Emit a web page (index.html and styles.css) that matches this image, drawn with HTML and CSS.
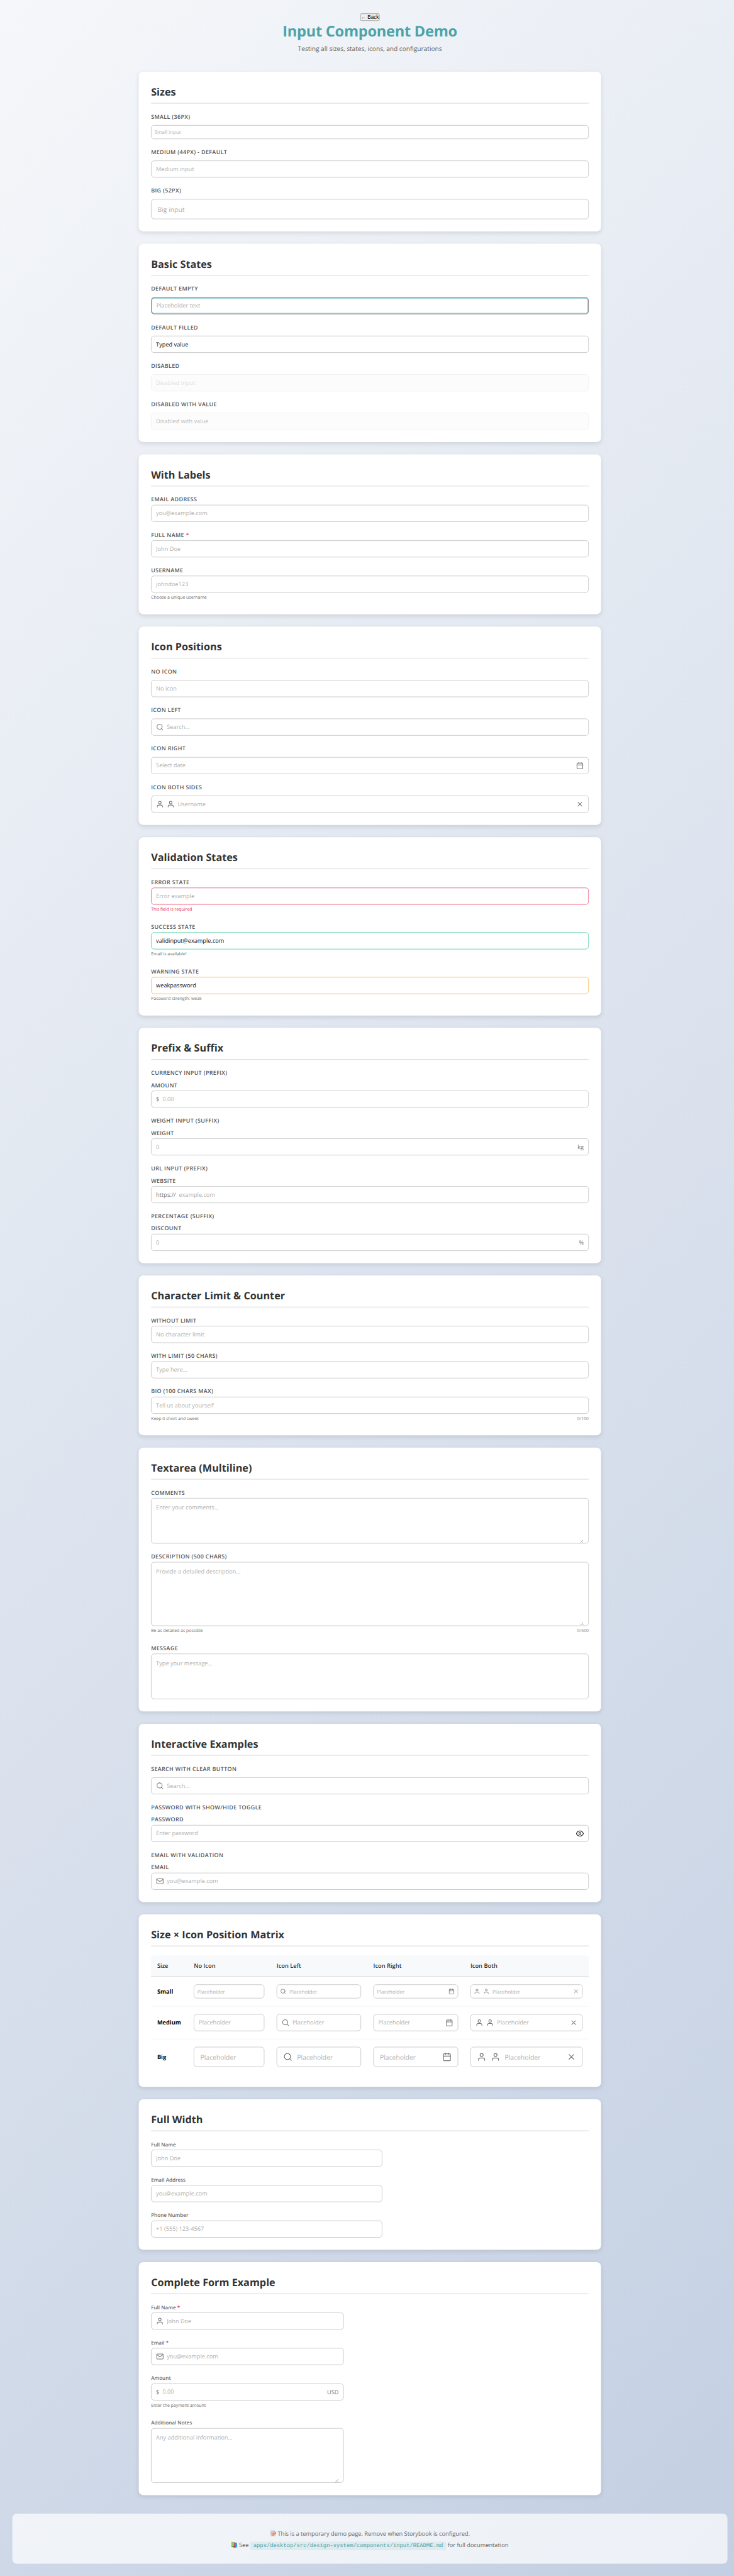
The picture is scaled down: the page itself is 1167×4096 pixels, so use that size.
FILE: index.html
```html
<!DOCTYPE html>
<html lang="en">
<head>
<meta charset="utf-8">
<title>Input Component Demo</title>
<link rel="stylesheet" href="styles.css">
</head>
<body>
<svg class="sprite" aria-hidden="true">
  <symbol id="search" viewBox="0 0 24 24"><circle cx="11" cy="11" r="8"/><path d="M21 21l-4.35-4.35"/></symbol>
  <symbol id="calendar" viewBox="0 0 24 24"><rect x="3" y="4" width="18" height="18" rx="2"/><path d="M16 2v4M8 2v4M3 10h18"/></symbol>
  <symbol id="user" viewBox="0 0 24 24"><path d="M20 21v-2a4 4 0 0 0-4-4H8a4 4 0 0 0-4 4v2"/><circle cx="12" cy="7" r="4"/></symbol>
  <symbol id="close" viewBox="0 0 24 24"><path d="M18 6L6 18M6 6l12 12"/></symbol>
  <symbol id="eye" viewBox="0 0 24 24"><path d="M1 12s4-8 11-8 11 8 11 8-4 8-11 8-11-8-11-8z"/><circle cx="12" cy="12" r="3"/></symbol>
  <symbol id="mail" viewBox="0 0 24 24"><rect x="2" y="4" width="20" height="16" rx="2"/><path d="M22 6l-10 7L2 6"/></symbol>
</svg>
<div class="page">
  <header class="header">
    <button class="back">← Back</button>
    <h1>Input Component Demo</h1>
    <p>Testing all sizes, states, icons, and configurations</p>
  </header>

  <main class="sections">
    <section class="card">
      <h2>Sizes</h2>
      <div class="stack">
        <div class="demo"><h3>Small (36px)</h3><div class="box small"><input placeholder="Small input"></div></div>
        <div class="demo"><h3>Medium (44px) - Default</h3><div class="box"><input placeholder="Medium input"></div></div>
        <div class="demo"><h3>Big (52px)</h3><div class="box big"><input placeholder="Big input"></div></div>
      </div>
    </section>

    <section class="card">
      <h2>Basic States</h2>
      <div class="stack">
        <div class="demo"><h3>Default Empty</h3><div class="box focused"><input placeholder="Placeholder text"></div></div>
        <div class="demo"><h3>Default Filled</h3><div class="box"><input value="Typed value"></div></div>
        <div class="demo"><h3>Disabled</h3><div class="box disabled"><input placeholder="Disabled input" disabled></div></div>
        <div class="demo"><h3>Disabled with Value</h3><div class="box disabled"><input value="Disabled with value" disabled></div></div>
      </div>
    </section>

    <section class="card">
      <h2>With Labels</h2>
      <div class="stack caps">
        <div class="field"><label>Email Address</label><div class="box"><input placeholder="you@example.com"></div></div>
        <div class="field"><label>Full Name <span class="req">*</span></label><div class="box"><input placeholder="John Doe"></div></div>
        <div class="field"><label>Username</label><div class="box"><input placeholder="johndoe123"></div><div class="help"><span>Choose a unique username</span></div></div>
      </div>
    </section>

    <section class="card">
      <h2>Icon Positions</h2>
      <div class="stack">
        <div class="demo"><h3>No Icon</h3><div class="box"><input placeholder="No icon"></div></div>
        <div class="demo"><h3>Icon Left</h3><div class="box"><svg class="icon"><use href="#search"/></svg><input placeholder="Search..."></div></div>
        <div class="demo"><h3>Icon Right</h3><div class="box"><input placeholder="Select date"><svg class="icon"><use href="#calendar"/></svg></div></div>
        <div class="demo"><h3>Icon Both Sides</h3><div class="box"><svg class="icon"><use href="#user"/></svg><svg class="icon"><use href="#user"/></svg><input placeholder="Username"><svg class="icon"><use href="#close"/></svg></div></div>
      </div>
    </section>

    <section class="card">
      <h2>Validation States</h2>
      <div class="stack caps">
        <div class="field"><label>Error State</label><div class="box error"><input placeholder="Error example"></div><div class="help bad"><span>This field is required</span></div></div>
        <div class="field"><label>Success State</label><div class="box success"><input value="validinput@example.com"></div><div class="help"><span>Email is available!</span></div></div>
        <div class="field"><label>Warning State</label><div class="box warning"><input value="weakpassword"></div><div class="help"><span>Password strength: weak</span></div></div>
      </div>
    </section>

    <section class="card">
      <h2>Prefix &amp; Suffix</h2>
      <div class="stack caps">
        <div class="demo"><h3>Currency Input (Prefix)</h3><div class="field"><label>Amount</label><div class="box"><span class="affix">$</span><input placeholder="0.00"></div></div></div>
        <div class="demo"><h3>Weight Input (Suffix)</h3><div class="field"><label>Weight</label><div class="box"><input placeholder="0"><span class="affix">kg</span></div></div></div>
        <div class="demo"><h3>URL Input (Prefix)</h3><div class="field"><label>Website</label><div class="box"><span class="affix">https://</span><input placeholder="example.com"></div></div></div>
        <div class="demo"><h3>Percentage (Suffix)</h3><div class="field"><label>Discount</label><div class="box"><input placeholder="0"><span class="affix">%</span></div></div></div>
      </div>
    </section>

    <section class="card">
      <h2>Character Limit &amp; Counter</h2>
      <div class="stack caps">
        <div class="field"><label>Without Limit</label><div class="box"><input placeholder="No character limit"></div></div>
        <div class="field"><label>With Limit (50 chars)</label><div class="box"><input placeholder="Type here..."></div></div>
        <div class="field"><label>Bio (100 chars max)</label><div class="box"><input placeholder="Tell us about yourself"></div><div class="help"><span>Keep it short and sweet</span><span class="count">0/100</span></div></div>
      </div>
    </section>

    <section class="card">
      <h2>Textarea (Multiline)</h2>
      <div class="stack caps">
        <div class="field"><label>Comments</label><div class="box area rows4"><textarea placeholder="Enter your comments..."></textarea></div></div>
        <div class="field"><label>Description (500 chars)</label><div class="box area rows6"><textarea placeholder="Provide a detailed description..."></textarea></div><div class="help"><span>Be as detailed as possible</span><span class="count">0/500</span></div></div>
        <div class="field"><label>Message</label><div class="box area rows4 fixed"><textarea placeholder="Type your message..."></textarea></div></div>
      </div>
    </section>

    <section class="card">
      <h2>Interactive Examples</h2>
      <div class="stack caps">
        <div class="demo"><h3>Search with Clear Button</h3><div class="box"><svg class="icon"><use href="#search"/></svg><input placeholder="Search..."></div></div>
        <div class="demo"><h3>Password with Show/Hide Toggle</h3><div class="field"><label>Password</label><div class="box"><input placeholder="Enter password"><svg class="icon dark"><use href="#eye"/></svg></div></div></div>
        <div class="demo"><h3>Email with Validation</h3><div class="field"><label>Email</label><div class="box"><svg class="icon"><use href="#mail"/></svg><input placeholder="you@example.com"></div></div></div>
      </div>
    </section>

    <section class="card">
      <h2>Size × Icon Position Matrix</h2>
      <div class="matrix">
        <div class="row head"><span>Size</span><span>No Icon</span><span>Icon Left</span><span>Icon Right</span><span>Icon Both</span></div>
        <div class="row">
          <strong>Small</strong>
          <div class="box small"><input placeholder="Placeholder"></div>
          <div class="box small"><svg class="icon"><use href="#search"/></svg><input placeholder="Placeholder"></div>
          <div class="box small"><input placeholder="Placeholder"><svg class="icon"><use href="#calendar"/></svg></div>
          <div class="box small"><svg class="icon"><use href="#user"/></svg><svg class="icon"><use href="#user"/></svg><input placeholder="Placeholder"><svg class="icon"><use href="#close"/></svg></div>
        </div>
        <div class="row">
          <strong>Medium</strong>
          <div class="box"><input placeholder="Placeholder"></div>
          <div class="box"><svg class="icon"><use href="#search"/></svg><input placeholder="Placeholder"></div>
          <div class="box"><input placeholder="Placeholder"><svg class="icon"><use href="#calendar"/></svg></div>
          <div class="box"><svg class="icon"><use href="#user"/></svg><svg class="icon"><use href="#user"/></svg><input placeholder="Placeholder"><svg class="icon"><use href="#close"/></svg></div>
        </div>
        <div class="row">
          <strong>Big</strong>
          <div class="box big"><input placeholder="Placeholder"></div>
          <div class="box big"><svg class="icon"><use href="#search"/></svg><input placeholder="Placeholder"></div>
          <div class="box big"><input placeholder="Placeholder"><svg class="icon"><use href="#calendar"/></svg></div>
          <div class="box big"><svg class="icon"><use href="#user"/></svg><svg class="icon"><use href="#user"/></svg><input placeholder="Placeholder"><svg class="icon"><use href="#close"/></svg></div>
        </div>
      </div>
    </section>

    <section class="card">
      <h2>Full Width</h2>
      <div class="stack w600">
        <div class="field"><label>Full Name</label><div class="box"><input placeholder="John Doe"></div></div>
        <div class="field"><label>Email Address</label><div class="box"><input placeholder="you@example.com"></div></div>
        <div class="field"><label>Phone Number</label><div class="box"><input placeholder="+1 (555) 123-4567"></div></div>
      </div>
    </section>

    <section class="card">
      <h2>Complete Form Example</h2>
      <div class="stack w500">
        <div class="field"><label>Full Name <span class="req">*</span></label><div class="box"><svg class="icon"><use href="#user"/></svg><input placeholder="John Doe"></div></div>
        <div class="field"><label>Email <span class="req">*</span></label><div class="box"><svg class="icon"><use href="#mail"/></svg><input placeholder="you@example.com"></div></div>
        <div class="field"><label>Amount</label><div class="box"><span class="affix">$</span><input placeholder="0.00"><span class="affix">USD</span></div><div class="help"><span>Enter the payment amount</span></div></div>
        <div class="field"><label>Additional Notes</label><div class="box area rows5"><textarea placeholder="Any additional information..."></textarea></div></div>
      </div>
    </section>
  </main>

  <footer class="footer">
    <p><svg class="emoji" viewBox="0 0 16 16"><path fill="#d3cfe0" d="M1 0h9l4 4v12H1z"/><path fill="#aaa4bd" d="M10 0l4 4h-4zM3 6h8v1H3zM3 8.500h7v1H3zM3 11h4v1H3z"/><path fill="#ff8a3c" d="M5 15l1-4 6-5 3 3-6 5z"/><path fill="#f0524f" d="M12 6l1.500-1.500 3 3L15 9z"/></svg> This is a temporary demo page. Remove when Storybook is configured.</p>
    <p><svg class="emoji" viewBox="0 0 16 16"><path fill="#35a8e8" d="M9 3l6-1 1 12-5 2z"/><path fill="#d9275f" d="M5 1l6 1v13H5z"/><path fill="#8ad25c" d="M0 0l8 1v10l-8 1z"/><path fill="#3c8f46" d="M0 12l8-1v2l-7 1z"/></svg> See <code>apps/desktop/src/design-system/components/input/README.md</code> for full documentation</p>
  </footer>
</div>
</body>
</html>
```
FILE: styles.css
```css
* { box-sizing: border-box; margin: 0; }

body {
  width: 1167px;
  height: 4096px;
  overflow: hidden;
  background: #e1e7f0;
}

.sprite { display: none; }

.page {
  display: flex;
  flex-direction: column;
  width: 1905px;
  height: 6689px;
  padding: 32px 17px 32px 32px;
  transform: scale(0.6126, 0.61235);
  transform-origin: 0 0;
  background: linear-gradient(135deg, #f5f7fa 0%, #c3cfe2 100%) 0 0 / 1920px 100%;
  font-family: "Open Sans", "Noto Sans", sans-serif;
  font-size: 15px;
  color: #333;
  text-rendering: geometricPrecision;
}

.header {
  display: flex;
  flex-direction: column;
  align-items: center;
  height: 154px;
  padding-top: 3px;
}
.back {
  width: 50px;
  height: 19px;
  padding: 0;
  border: 1px solid #767676;
  border-radius: 3px;
  background: #efefef;
  color: #000;
  font: 13.33px/16px "Liberation Sans", Arial, sans-serif;
  white-space: nowrap;
}
h1 {
  margin-top: 1px;
  font-size: 38.5px;
  line-height: 53px;
  font-weight: 700;
  letter-spacing: -0.43px;
  color: #4aa3a8;
}
.header p {
  margin-top: 7px;
  font-size: 16.7px;
  line-height: 24px;
  letter-spacing: -0.09px;
  color: #666;
}

.sections {
  display: flex;
  flex-direction: column;
  gap: 32px;
  width: 1200px;
  margin: 0 auto;
}
.card {
  padding: 32px;
  border-radius: 12px;
  background: #fff;
  box-shadow: 0 4px 12px rgba(0, 0, 0, 0.1);
}
h2 {
  height: 51px;
  margin-bottom: 24px;
  border-bottom: 2px solid #e0e0e0;
  font-size: 26.5px;
  line-height: 40px;
  font-weight: 700;
  color: #333;
}

.stack { display: flex; flex-direction: column; gap: 24px; }
.w600 { width: 600px; }
.w500 { width: 500px; }
.demo { display: flex; flex-direction: column; gap: 12px; }
.field { display: flex; flex-direction: column; }

h3, label {
  height: 20px;
  line-height: 20px;
  font-weight: 600;
  white-space: nowrap;
}
h3, .caps label {
  font-size: 14.6px;
  letter-spacing: 0.58px;
  text-transform: uppercase;
  color: #555;
}
label {
  margin-bottom: 4px;
  font-size: 13.2px;
  color: #6b6b6b;
}
.req { color: #e11d48; }

.box {
  display: flex;
  align-items: center;
  gap: 8px;
  height: 44px;
  padding: 0 12px;
  border: 1px solid #adadad;
  border-radius: 8px;
  background: #fff;
  font-size: 15px;
}
.box input, .box textarea {
  flex: 1;
  min-width: 0;
  padding: 0;
  border: 0;
  outline: 0;
  background: transparent;
  color: #111;
  font-family: inherit;
  font-size: inherit;
  text-rendering: inherit;
}
.box ::placeholder { color: #b0b0b0; opacity: 1; }
.small { height: 36px; padding: 0 8px; font-size: 13.1px; }
.big { height: 52px; padding: 0 16px; gap: 12px; font-size: 16.9px; }
.focused { border: 2px solid #8f8f8f; box-shadow: inset 0 0 0 1px #4aa3a8; }
.disabled { border-color: #ececec; background: #fcfcfc; }
.disabled input { color: #bdbdbd; }
.disabled ::placeholder { color: #e0e0e0; }
.error { border-color: #e11d48; }
.success { border-color: #10b981; }
.warning { border-color: #f59e0b; }

.area { padding: 0 12px; align-items: stretch; }
.area textarea { padding: 12px 0; line-height: 24px; resize: vertical; }
.rows4 { height: 118px; }
.rows5 { height: 142px; }
.rows6 { height: 166px; }
.fixed textarea { resize: none; }

.icon {
  flex: none;
  width: 20px;
  height: 20px;
  fill: none;
  stroke: #757575;
  stroke-width: 2;
  stroke-linecap: round;
  stroke-linejoin: round;
}
.small .icon { width: 16px; height: 16px; }
.big .icon { width: 24px; height: 24px; }
.icon.dark { stroke: #111; }
.affix { padding-top: 2px; color: #757575; }

.help {
  display: flex;
  justify-content: space-between;
  height: 24px;
  padding-top: 4px;
  font-size: 11.3px;
  line-height: 17px;
  color: #6b6b6b;
}
.help.bad { color: #e11d48; }
.count { color: #8a8a8a; }

.matrix { display: flex; flex-direction: column; height: 309px; }
.row {
  display: grid;
  grid-template-columns: 95px 215px 251px 252px 323px;
  align-items: center;
  height: 77px;
  border-bottom: 1px solid #eee;
}
.row > * { margin: 0 16px; }
.row:nth-child(3) { height: 85px; }
.row:nth-child(4) { height: 92px; border-bottom: 0; }
.row.head {
  height: 55px;
  border-bottom: 2px solid #dcdfe2;
  border-radius: 8px 8px 0 0;
  background: #f8f9fb;
  font-size: 15.2px;
  font-weight: 600;
}
.row strong { color: #000; font-weight: 700; }

.footer {
  display: flex;
  flex-direction: column;
  gap: 4px;
  height: 130px;
  margin-top: 48px;
  padding: 39px 32px 0;
  border-radius: 12px;
  background: rgba(255, 255, 255, 0.7);
  text-align: center;
  font-size: 15.1px;
  color: #666;
}
.footer p { line-height: 26px; white-space: nowrap; }
.footer code {
  padding: 3px 8px;
  border-radius: 4px;
  background: rgba(74, 163, 168, 0.1);
  color: #4aa3a8;
  font: 14.4px "Liberation Mono", "Courier New", monospace;
}
.emoji { width: 16px; height: 16px; vertical-align: -2px; }
```
